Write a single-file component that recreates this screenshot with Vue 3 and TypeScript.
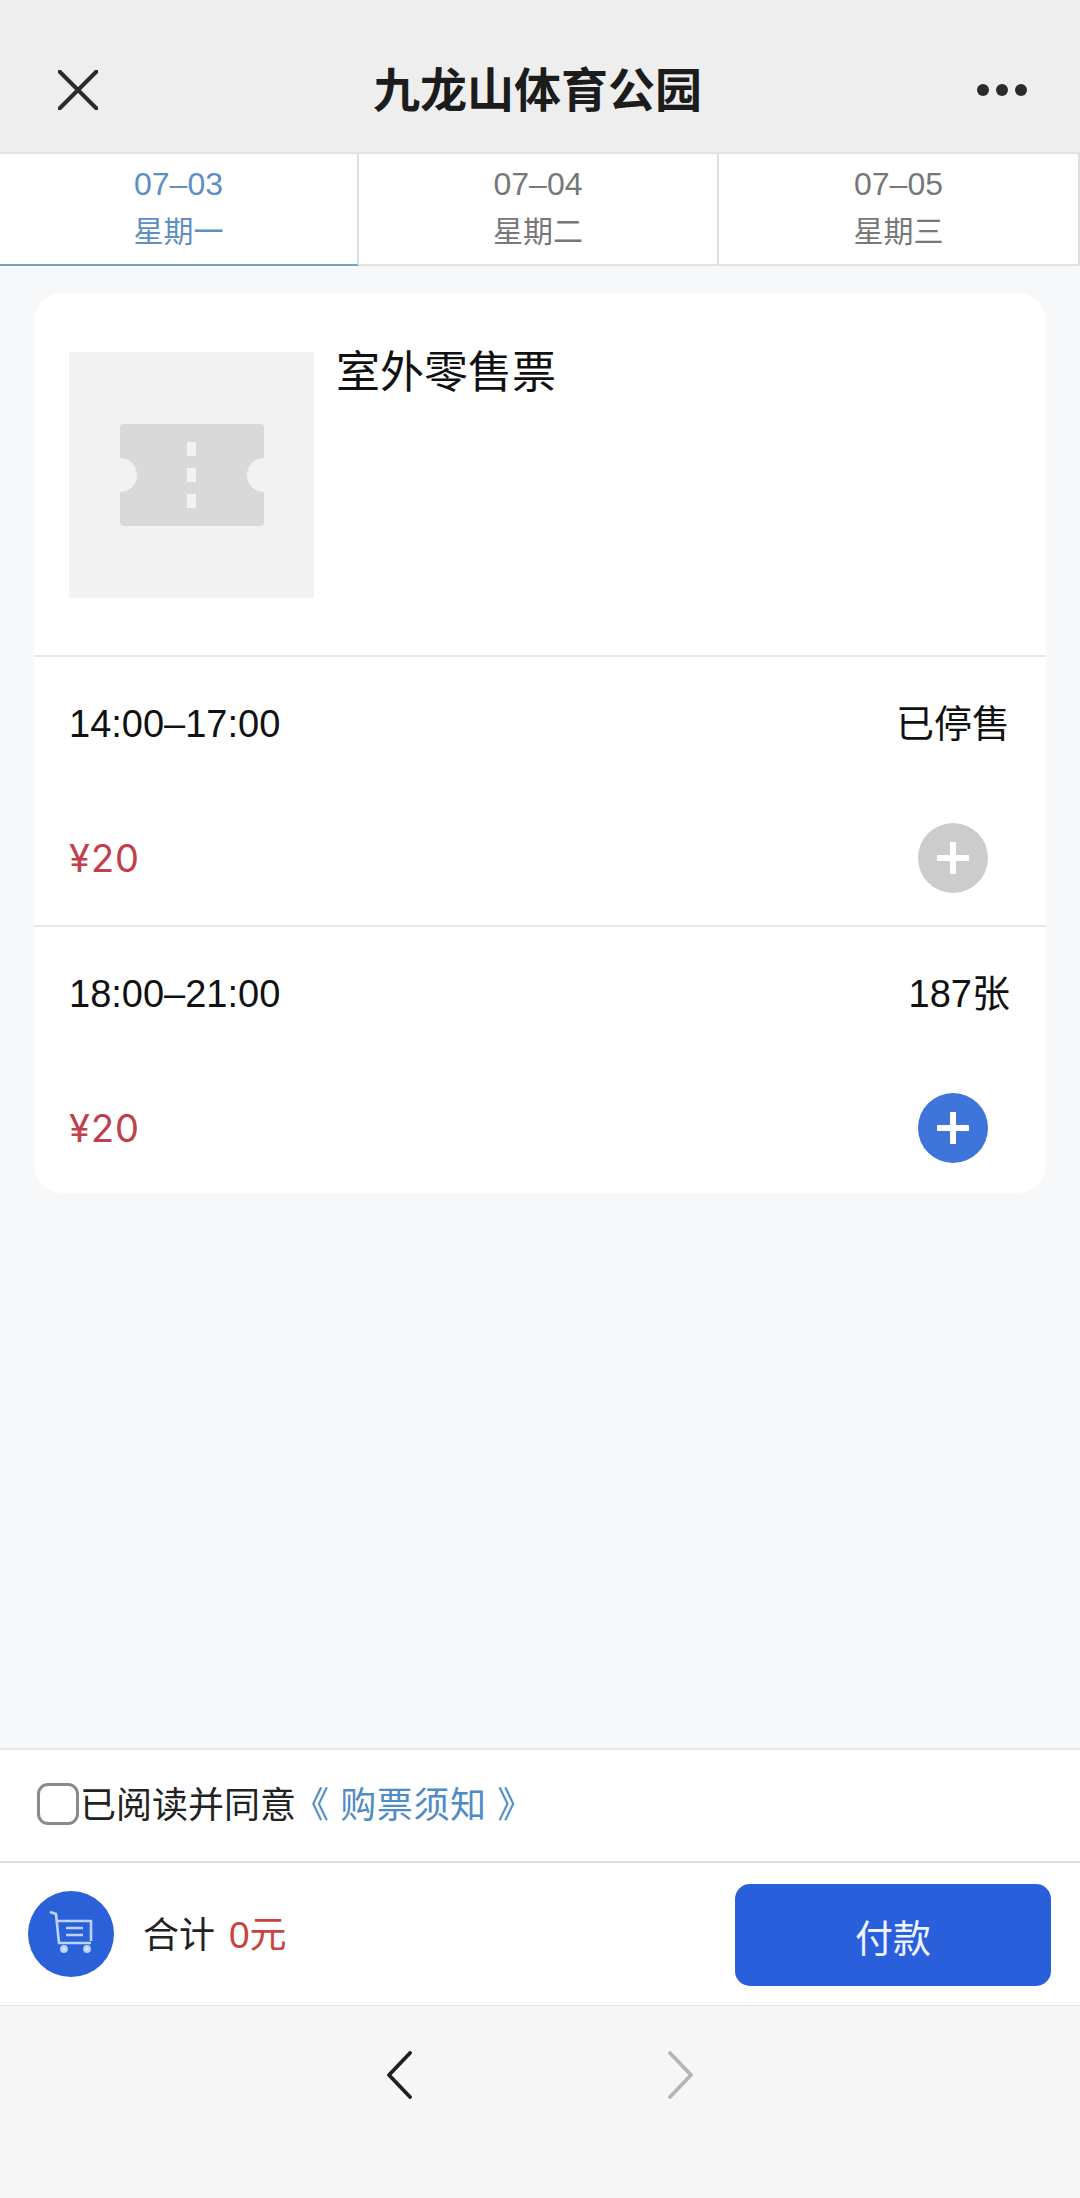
<script setup lang="ts">
interface Day { date: string; week: string; active?: boolean }
interface Session { time: string; stock: string; enabled: boolean }

const days: Day[] = [
  { date: '07–03', week: '星期一', active: true },
  { date: '07–04', week: '星期二' },
  { date: '07–05', week: '星期三' },
]
const sessions: Session[] = [
  { time: '14:00–17:00', stock: '已停售', enabled: false },
  { time: '18:00–21:00', stock: '187张', enabled: true },
]
</script>

<template>
  <div class="page">
    <header class="top">
      <svg class="close" width="40" height="40" viewBox="0 0 40 40">
        <path d="M1.5 1.5 L38.5 38.5 M38.5 1.5 L1.5 38.5" stroke="#2b2b2b" stroke-width="4" stroke-linecap="round" fill="none" />
      </svg>
      <h1 class="title">九龙山体育公园</h1>
      <div class="dots"><i></i><i></i><i></i></div>
    </header>

    <nav class="tabs">
      <div v-for="d in days" :key="d.date" class="tab" :class="{ active: d.active }">
        <span class="date">{{ d.date }}</span>
        <span class="week">{{ d.week }}</span>
      </div>
    </nav>

    <main class="main">
      <section class="card">
        <div class="product">
          <div class="thumb">
            <svg width="144" height="102" viewBox="0 0 144 102">
              <path d="M4 0 H140 a4 4 0 0 1 4 4 V34 a17 17 0 0 0 0 34 V98 a4 4 0 0 1 -4 4 H4 a4 4 0 0 1 -4 -4 V68 a17 17 0 0 0 0 -34 V4 a4 4 0 0 1 4 -4 Z" fill="#d9d9d9" />
              <rect x="67" y="18" width="9" height="14" fill="#f2f2f2" />
              <rect x="67" y="44" width="9" height="14" fill="#f2f2f2" />
              <rect x="67" y="70" width="9" height="14" fill="#f2f2f2" />
            </svg>
          </div>
          <div class="name">室外零售票</div>
        </div>

        <div v-for="s in sessions" :key="s.time" class="session">
          <div class="line">
            <span>{{ s.time }}</span>
            <span>{{ s.stock }}</span>
          </div>
          <div class="line buy">
            <span class="price">¥20</span>
            <span class="add" :class="{ on: s.enabled }">
              <svg width="32" height="32" viewBox="0 0 32 32">
                <path d="M16 1.5 V30.5 M1.5 16 H30.5" stroke="#fff" stroke-width="6" stroke-linecap="round" />
              </svg>
            </span>
          </div>
        </div>
      </section>
    </main>

    <div class="agree">
      <span class="check"></span>
      <span>已阅读并同意</span>
      <span class="link">《 购票须知 》</span>
    </div>

    <div class="pay">
      <span class="cart">
        <svg width="86" height="86" viewBox="0 0 86 86" fill="none" stroke="#bcd2f8" stroke-width="2.6">
          <path d="M22 21 L28 23 L31 52 H63" />
          <path d="M29 30 H63 V50" />
          <path d="M38 37 H55 M38 44 H55" />
          <circle cx="36" cy="58" r="2.6" fill="#dfe9fb" />
          <circle cx="59" cy="58" r="2.6" fill="#dfe9fb" />
        </svg>
      </span>
      <span class="total">合计 <em>0元</em></span>
      <button class="paybtn" type="button">付款</button>
    </div>

    <footer class="bottom">
      <svg width="26" height="48" viewBox="0 0 26 48">
        <path d="M24 2 L3 24 L24 46" stroke="#1f1f1f" stroke-width="3.8" stroke-linecap="round" stroke-linejoin="round" fill="none" />
      </svg>
      <svg width="26" height="48" viewBox="0 0 26 48">
        <path d="M2 2 L23 24 L2 46" stroke="#b5b5b5" stroke-width="3.8" stroke-linecap="round" stroke-linejoin="round" fill="none" />
      </svg>
    </footer>
  </div>
</template>

<style>
html, body { margin: 0; padding: 0; }
</style>

<style scoped>
.page {
  width: 1080px;
  height: 2198px;
  display: flex;
  flex-direction: column;
  background: #f6f8fa;
  font-family: "Liberation Sans", "Noto Sans CJK SC", sans-serif;
  color: #111;
  overflow: hidden;
}
.top {
  height: 152px;
  flex: none;
  box-sizing: border-box;
  background: #eeeeee;
  display: flex;
  align-items: center;
  justify-content: space-between;
  padding: 27px 53px 0 58px;
}
.close { display: block; }
.title {
  margin: 2px 0 0;
  font-size: 47px;
  font-weight: 700;
  line-height: 60px;
  color: #1c1c1c;
}
.dots { display: flex; gap: 7px; }
.dots i { width: 12px; height: 12px; border-radius: 50%; background: #2b2b2b; display: block; }

.tabs {
  height: 114px;
  flex: none;
  display: grid;
  grid-template-columns: 359px 360px 361px;
  box-sizing: border-box;
  border-top: 2px solid #e2e2e2;
}
.tab {
  background: #fff;
  display: flex;
  flex-direction: column;
  align-items: center;
  color: #777;
  border-right: 2px solid #dfdfdf;
  border-bottom: 2px solid #e3e3e3;
  padding-top: 10px;
  box-sizing: border-box;
}
.tab.active { color: #5e8fc2; border-bottom: 2px solid #76a3c4; }
.date { font-size: 32px; line-height: 40px; }
.week { font-size: 30px; line-height: 40px; margin-top: 8px; }

.main { flex: 1; min-height: 0; padding: 27px 34px 0; }
.card { background: #fff; border-radius: 28px; }
.product {
  height: 362px;
  box-sizing: border-box;
  display: flex;
  padding: 59px 35px;
  gap: 22px;
}
.thumb {
  width: 245px;
  height: 246px;
  background: #f2f2f2;
  display: flex;
  align-items: center;
  justify-content: center;
}
.name { font-size: 44px; line-height: 42px; color: #111; }
.session { height: 270px; box-sizing: border-box; border-top: 2px solid #e8e8e8; padding: 44px 36px 0 35px; }
.session:last-child { height: 268px; }
.line {
  display: flex;
  justify-content: space-between;
  align-items: center;
  font-size: 38px;
  line-height: 46px;
}
.buy { margin-top: 76px; padding-right: 22px; }
.price { color: #c2404c; font-size: 38px; font-family: "Inter", "Liberation Sans", sans-serif; letter-spacing: 1px; }
.add {
  width: 70px;
  height: 70px;
  border-radius: 50%;
  background: #cccccc;
  display: flex;
  align-items: center;
  justify-content: center;
}
.add.on { background: #3f74da; }

.agree {
  height: 115px;
  flex: none;
  box-sizing: border-box;
  background: #fff;
  border-top: 2px solid #e6e6e6;
  border-bottom: 2px solid #dcdcdc;
  display: flex;
  align-items: center;
  padding: 0 0 7px 37px;
  font-size: 36px;
  color: #222;
}
.check {
  width: 42px;
  height: 42px;
  box-sizing: border-box;
  border: 3.5px solid #8a8a8a;
  border-radius: 11px;
  margin: 3px 1px 0 0;
}
.link { color: #4f8cc6; margin-left: -3px; font-size: 36px; letter-spacing: 0.6px; }

.pay {
  height: 143px;
  flex: none;
  box-sizing: border-box;
  background: #fff;
  border-bottom: 1px solid #e4e4e4;
  display: flex;
  align-items: center;
  padding: 0 29px 0 28px;
}
.cart {
  width: 86px;
  height: 86px;
  border-radius: 50%;
  background: #2a60d8;
  display: block;
  margin-right: 29px;
  flex: none;
}
.cart svg { display: block; }
.total { font-size: 36px; color: #222; flex: 1; padding-bottom: 4px; }
.total em { font-style: normal; color: #c8453f; margin-left: 4px; font-size: 37px; }
.paybtn {
  width: 316px;
  height: 102px;
  border: 0;
  border-radius: 15px;
  background: #2a5fdb;
  color: #eef3ff;
  font-size: 38px;
  font-family: inherit;
  margin-top: 2px;
}
.bottom {
  flex: none;
  height: 192px;
  background: #f6f6f6;
  display: flex;
  justify-content: center;
  gap: 256px;
  padding-top: 45px;
  box-sizing: border-box;
  align-items: flex-start;
}
</style>
